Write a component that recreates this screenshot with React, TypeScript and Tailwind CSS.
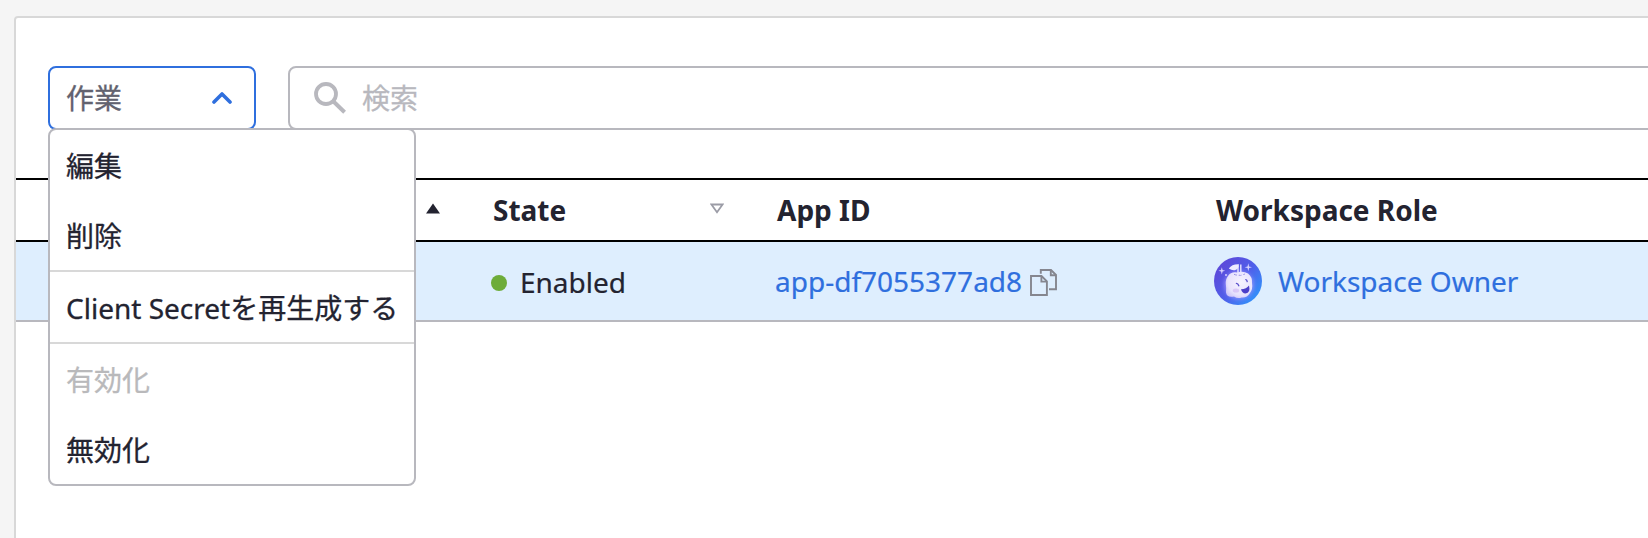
const GRID = 'grid grid-cols-[474px_284px_440px_1fr]';

function SearchIcon() {
  return (
    <svg className="h-8 w-8 shrink-0" viewBox="0 0 32 32" fill="none" stroke="#b8b8be" strokeWidth="3.8">
      <circle cx="12" cy="12" r="10" />
      <path d="M20 20 L30.6 30.2" strokeWidth="4" />
    </svg>
  );
}

function CopyIcon() {
  return (
    <svg className="ml-2 mt-[3px] h-[27px] w-[27px] shrink-0" viewBox="0 0 27 27" fill="none" stroke="#85868f" strokeWidth="1.9">
      <path d="M10.8 4.8 V1 H21 L26 6 V20.2 H19" />
      <path d="M20.8 1 V6.2 H26" />
      <path d="M1 7 H11.5 L16.9 12.4 V26 H1 Z" />
      <path d="M11.4 7.2 V12.6 H16.7" />
    </svg>
  );
}

function Avatar() {
  return (
    <svg className="h-12 w-12 shrink-0" viewBox="0 0 48 48">
      <defs>
        <linearGradient id="sky" x1="0.15" y1="0.2" x2="0.9" y2="0.85">
          <stop offset="0" stopColor="#5b4bdb" />
          <stop offset="0.5" stopColor="#505fea" />
          <stop offset="1" stopColor="#3191fa" />
        </linearGradient>
        <radialGradient id="body" cx="0.58" cy="0.4" r="0.7">
          <stop offset="0" stopColor="#f6f3ff" />
          <stop offset="0.7" stopColor="#e8e3fd" />
          <stop offset="1" stopColor="#cbc3f8" />
        </radialGradient>
        <filter id="glow" x="-30%" y="-30%" width="160%" height="160%">
          <feGaussianBlur stdDeviation="2" />
        </filter>
      </defs>
      <circle cx="24" cy="24" r="24" fill="url(#sky)" />
      <ellipse cx="25" cy="28" rx="14.5" ry="14" fill="#a79bff" opacity="0.8" filter="url(#glow)" />
      <path
        d="M14 19 Q17 14.5 23 15.5 Q29 13.5 34 16.5 Q38.5 20 38 26 Q39 32 36 36 Q33 41 27.5 40.5 Q24 42 20 39.5 Q13 41 12 35.5 Q12.5 31 11.8 27 Q11.5 22 14 19Z"
        fill="url(#body)"
      />
      <path d="M20 17.3 Q25 19.4 31 17" fill="none" stroke="#8f86e0" strokeWidth="0.9" strokeDasharray="3 1.8" />
      <path d="M24 18 V8.5 M26.8 18 V7.5" stroke="#eae7ff" strokeWidth="1.4" />
      <path d="M14.8 11.5 Q18 6.8 25 7.2 Q24.5 12.5 20.8 13.2 Q18 13.8 14.8 11.5Z" fill="#eeebff" />
      <path d="M22.4 26.4 Q24 26.5 24.8 28.8 M31.8 22.6 Q33 22.7 33.2 24.6" stroke="#5a50cc" strokeWidth="1.3" fill="none" strokeLinecap="round" />
      <path d="M27 32.2 Q32.5 32 35 28.5 Q36.8 36 31.5 36.6 Q28 36.2 27 32.2Z" fill="#4c3fc9" />
      <ellipse cx="22" cy="33.5" rx="3.2" ry="2" fill="#c7aaf1" opacity="0.5" />
      <g fill="#d5d0fd">
        <path d="M7.8 10.2 L8.6 13 L11.2 13.8 L8.6 14.6 L7.8 17.4 L7 14.6 L4.4 13.8 L7 13Z" />
        <path d="M34.3 6.2 L35.1 9.4 L38 10.2 L35.1 11 L34.3 14.2 L33.5 11 L30.6 10.2 L33.5 9.4Z" />
        <circle cx="12" cy="18" r="1" />
      </g>
    </svg>
  );
}

function MenuItem({ label, disabled = false }: { label: string; disabled?: boolean }) {
  return (
    <button
      role="menuitem"
      disabled={disabled}
      className={`flex h-[70px] w-full items-center whitespace-nowrap px-4 pt-0.5 text-left [-webkit-text-stroke:0.3px] ${disabled ? 'text-[#b9b9bb]' : 'text-[#232330]'}`}
    >
      {label}
    </button>
  );
}

function ActionMenu() {
  return (
    <div role="menu" className="absolute left-0 top-[62px] z-10 w-[368px] rounded-lg border-2 border-[#b8b8be] bg-white">
      <MenuItem label="編集" />
      <MenuItem label="削除" />
      <div className="h-0.5 bg-[#d8d8d8]" />
      <MenuItem label="Client Secretを再生成する" />
      <div className="h-0.5 bg-[#d8d8d8]" />
      <MenuItem label="有効化" disabled />
      <MenuItem label="無効化" />
    </div>
  );
}

export default function App() {
  return (
    <div className="h-[538px] w-full overflow-hidden bg-[#f5f5f5] pl-[14px] pt-4 font-['Noto_Sans','Noto_Sans_CJK_JP',sans-serif] text-[28px] leading-10 text-[#232330]">
      <div className="h-[560px] w-[1700px] rounded-tl border-2 border-[#d8d8d8] bg-white">
        <div className="flex gap-8 pl-8 pt-12">
          <div className="relative">
            <button className="flex h-16 w-[208px] items-center justify-between rounded-lg border-2 border-[#2f6fde] pl-4 pr-[22px] text-[#62626f] [-webkit-text-stroke:0.3px]">
              作業
              <svg className="h-3 w-5" viewBox="0 0 20 12" fill="none" stroke="#2f6fde" strokeWidth="3.6" strokeLinecap="round" strokeLinejoin="round">
                <path d="M2 10 L10 2 L18 10" />
              </svg>
            </button>
            <ActionMenu />
          </div>
          <div className="flex h-16 flex-1 items-center gap-4 rounded-lg border-2 border-[#b8b8be] pl-6 text-[#b8b8be] [-webkit-text-stroke:0.3px]">
            <SearchIcon />
            検索
          </div>
        </div>
        <div className="mt-12">
          <div className={`${GRID} h-16 items-center border-y-2 border-black font-bold`}>
            <div className="flex justify-end pr-[50px]">
              <svg className="mb-[3px] h-[11px] w-[14px]" viewBox="0 0 14 11" fill="#232330">
                <path d="M7 0.5 L14 10.5 H0Z" />
              </svg>
            </div>
            <div className="flex items-center justify-between pl-[3px] pr-[50px]">
              State
              <svg className="mb-1 h-[11px] w-[14px]" viewBox="0 0 14 11" fill="none" stroke="#9b9ca6" strokeWidth="1.8">
                <path d="M1.4 1.5 H12.6 L7 9.3Z" />
              </svg>
            </div>
            <div className="pl-[3px]">App ID</div>
            <div className="pl-0.5">Workspace Role</div>
          </div>
          <div className={`${GRID} h-20 items-center border-b-2 border-[#b8b8be] bg-[#deeefe]`}>
            <div />
            <div className="flex items-center pl-px pt-0.5 [-webkit-text-stroke:0.2px]">
              <span className="mr-[13px] mt-0.5 h-4 w-4 rounded-full bg-[#6dac3a]" />
              Enabled
            </div>
            <div className="flex items-center pl-px text-[#2f6fde] [-webkit-text-stroke:0.2px]">
              app-df7055377ad8
              <CopyIcon />
            </div>
            <div className="flex items-center gap-4 text-[#2f6fde] [-webkit-text-stroke:0.2px]">
              <Avatar />
              Workspace Owner
            </div>
          </div>
        </div>
      </div>
    </div>
  );
}
